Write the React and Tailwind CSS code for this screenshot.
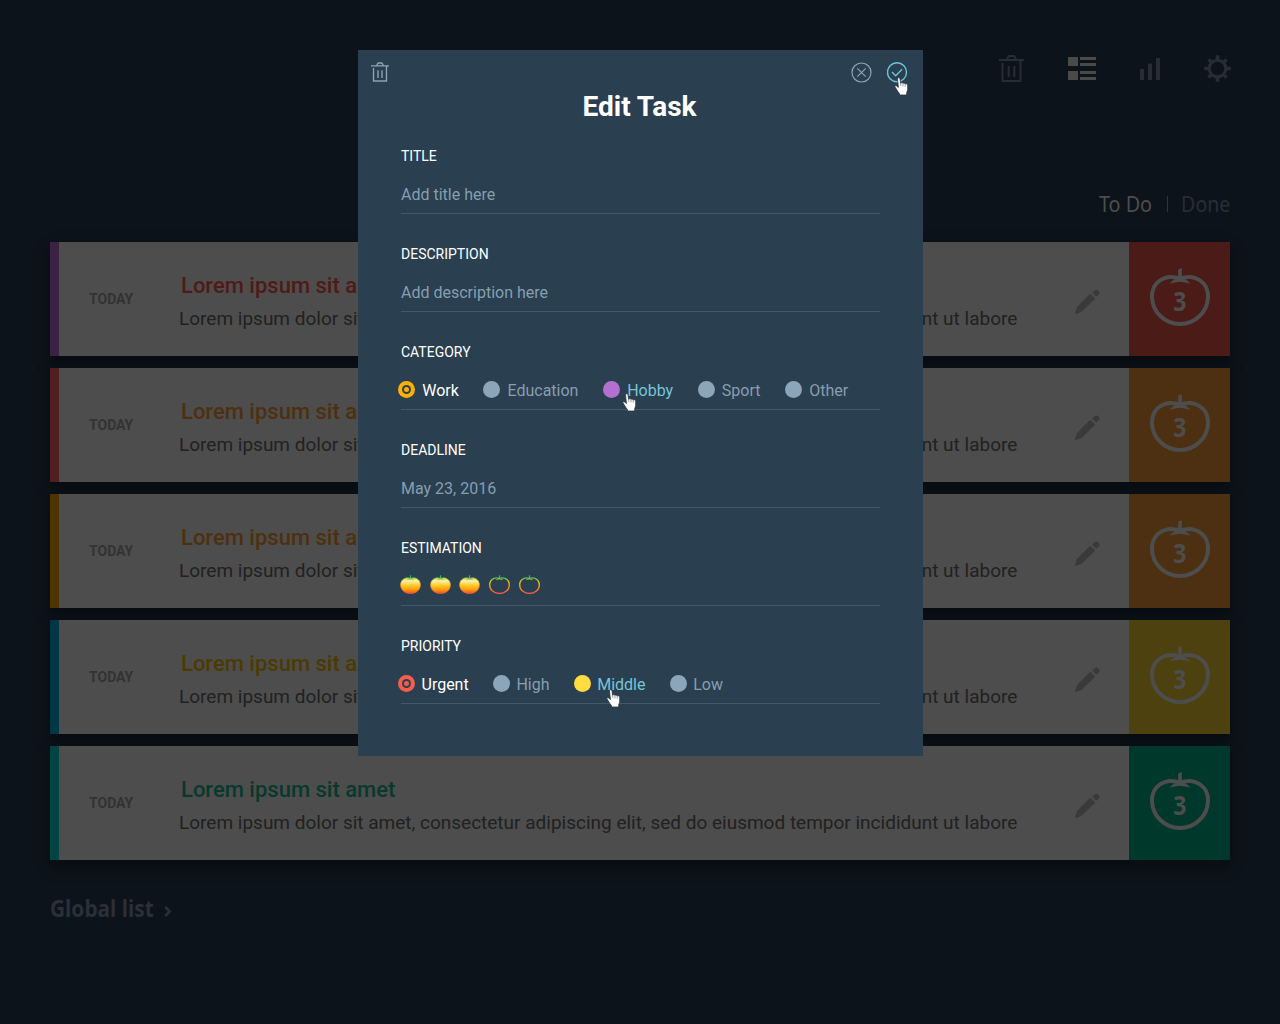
import React from "react";

const DESCRIPTION =
  "Lorem ipsum dolor sit amet, consectetur adipiscing elit, sed do eiusmod tempor incididunt ut labore";

const TASKS = [
  { strip: "bg-[#3b2144]", badge: "bg-[#4b1b17]", title: "text-[#4f1a17]" },
  { strip: "bg-[#511f20]", badge: "bg-[#4c3011]", title: "text-[#4d3010]" },
  { strip: "bg-[#4d3500]", badge: "bg-[#4c3011]", title: "text-[#4d3010]" },
  { strip: "bg-[#003747]", badge: "bg-[#4c410f]", title: "text-[#4b3b03]" },
  { strip: "bg-[#004444]", badge: "bg-[#00382c]", title: "text-[#08392c]" },
];

const CATEGORIES = [
  { name: "Work", dot: "bg-[#ffb000]", text: "text-white", selected: true },
  { name: "Education", dot: "bg-[#8da5b8]", text: "text-[#879eb1]" },
  { name: "Hobby", dot: "bg-[#b470d0]", text: "text-[#76c5d8]", hover: "left-[-5px] top-[14px]" },
  { name: "Sport", dot: "bg-[#8da5b8]", text: "text-[#879eb1]" },
  { name: "Other", dot: "bg-[#8da5b8]", text: "text-[#879eb1]" },
];

const PRIORITIES = [
  { name: "Urgent", dot: "bg-[#f75c4c]", text: "text-white", selected: true },
  { name: "High", dot: "bg-[#8da5b8]", text: "text-[#879eb1]" },
  { name: "Middle", dot: "bg-[#ffdc40]", text: "text-[#76c5d8]", hover: "left-[9px] top-[16px]" },
  { name: "Low", dot: "bg-[#8da5b8]", text: "text-[#879eb1]" },
];

function TrashIcon({ className, strokeWidth = 2 }) {
  return (
    <svg className={className} viewBox="0 0 25 27" fill="none" stroke="currentColor" strokeWidth={strokeWidth}>
      <path d="M0 5H25M3.500 8V26H21.500V5M8.500 5V3L10 1H15L16.500 3V5M9.700 11V22M15.300 11V22" />
    </svg>
  );
}

function ListIcon() {
  return (
    <svg className="h-[23px] w-7" viewBox="0 0 28 23" fill="currentColor">
      <path d="M0 0H10V9H0ZM0 14H10V23H0ZM12 0H28V3H12ZM12 6H28V9H12ZM12 14H28V17H12ZM12 20H28V23H12Z" />
    </svg>
  );
}

function ChartIcon() {
  return (
    <svg className="h-[22px] w-5" viewBox="0 0 20 22" fill="currentColor">
      <path d="M0 11H4V22H0ZM8 5.500H12V22H8ZM16 0H20V22H16Z" />
    </svg>
  );
}

function GearIcon() {
  return (
    <svg className="size-[27px]" viewBox="-13.500 -13.500 27 27" fill="none" stroke="currentColor">
      <circle r="8.300" strokeWidth="3" />
      <g strokeWidth="3.600">
        <path d="M0 -9V-13.300M0 9V13.300M-9 0H-13.300M9 0H13.300M6.400 -6.400L9 -9M-6.400 -6.400L-9 -9M6.400 6.400L9 9M-6.400 6.400L-9 9" />
      </g>
    </svg>
  );
}

function PencilIcon() {
  return (
    <svg className="size-[25px] text-[#3a3a3a]" viewBox="0 0 25 25" fill="currentColor">
      <path d="M15.800 5.200L19.800 9.200Q20 9.700 19.600 10.200L7 22.600L1.100 25Q0 25.200 0.100 24L2.200 17.700L14.700 5.300Q15.300 4.800 15.800 5.200Z" />
      <path d="M17.300 3.600L20 0.900Q21.500 -0.200 23.200 1.400Q25.200 3.300 24.200 4.900L21.400 7.700Z" />
    </svg>
  );
}

function TomatoBadge() {
  return (
    <div className="relative mt-[26px] ml-[21px] h-[58px] w-[60px]">
      <svg className="size-full" viewBox="0 0 60 58">
        <path
          d="M30 10.500C25 9 20 8.300 15.500 9.800C7 12.500 2 19.500 2 28.500C2 44 15 56 30 56C45 56 58 44 58 28.500C58 19.500 53 12.500 44.500 9.800C40 8.300 35 9 30 10.500Z"
          fill="none"
          stroke="#4d4d4d"
          strokeWidth="4"
        />
        <path
          d="M28.200 1.500L31.800 0V8.600L35 11Q37.500 12.500 40.500 15.800Q35 14.300 30 13.800Q25 14.300 19.500 15.800Q22.500 12.500 25 11L28.200 8.600Z"
          fill="#4d4d4d"
        />
      </svg>
      <span className="absolute inset-x-0 top-[15px] text-center font-['Noto_Sans',sans-serif] text-[27px] leading-9 font-bold text-[#4d4d4d]">
        <span className="inline-block scale-x-85">3</span>
      </span>
    </div>
  );
}

function TaskCard({ task }) {
  return (
    <article className="flex h-[114px] bg-[#4d4d4d] shadow-[0_6px_12px_rgba(4,10,12,0.7)]">
      <div className={`w-[9px] ${task.strip}`} />
      <div className="w-[120px] pt-[47px] pl-[30px] text-sm font-bold text-[#333333]">TODAY</div>
      <div className="min-w-0 flex-1 pt-[30px]">
        <h2 className={`pl-0.5 text-[22px] leading-7 font-medium ${task.title}`}>Lorem ipsum sit amet</h2>
        <p className="mt-[5px] text-[19px] leading-7 whitespace-nowrap text-[#212121]">{DESCRIPTION}</p>
      </div>
      <div className="w-[54px] pt-[47px]">
        <PencilIcon />
      </div>
      <div className={`w-[101px] ${task.badge}`}>
        <TomatoBadge />
      </div>
    </article>
  );
}

function HandCursor({ className }) {
  return (
    <svg className={`absolute z-10 h-[19px] w-[15px] ${className}`} viewBox="0 0 15 19">
      <path
        d="M3.500 1.800C3.500 0.300 5.800 0.300 6 1.800L6.600 6.300C7.200 5.200 8.600 5.400 8.900 6.400C9.700 5.600 10.900 6 11.200 7C12.200 6.300 13.700 7 13.700 8.300V12.500C13.700 14 12.700 14.700 12.700 16V18H5.500V16.500C4.500 15.400 3.400 14.200 2.700 12.600L1 10C0.500 8.900 1.700 8.300 2.600 9L4.400 10.500Z"
        fill="#fff"
        stroke="#2b3640"
        strokeWidth="0.800"
      />
      <path d="M6.800 6V9M9 6.400V9.400M11.200 7V9.800" stroke="#5b6670" strokeWidth="0.600" />
    </svg>
  );
}

function Radio({ option, className }) {
  return (
    <div className={`flex items-center ${className}`}>
      <span className={`-mt-[3px] flex size-[17px] items-center justify-center rounded-full ${option.dot}`}>
        {option.selected && (
          <span className="flex size-[9px] items-center justify-center rounded-full bg-[#2a3f4f]">
            <span className={`size-[5px] rounded-full ${option.dot}`} />
          </span>
        )}
      </span>
      <span className={`relative ${option.text}`}>
        {option.name}
        {option.hover && <HandCursor className={option.hover} />}
      </span>
    </div>
  );
}

function Tomato({ filled }) {
  return (
    <svg className="h-5 w-[21px]" viewBox="0 0 21 20">
      <defs>
        <linearGradient id="tomato-fill" x1="0" y1="0" x2="0" y2="1">
          <stop offset="0" stopColor="#e9d33c" />
          <stop offset="0.200" stopColor="#fff0b0" />
          <stop offset="0.500" stopColor="#ffc91f" />
          <stop offset="0.750" stopColor="#ff9a10" />
          <stop offset="1" stopColor="#f0501c" />
        </linearGradient>
        <linearGradient id="tomato-line" gradientUnits="userSpaceOnUse" x1="0" y1="1" x2="0" y2="19">
          <stop offset="0" stopColor="#1dac8b" />
          <stop offset="0.180" stopColor="#8ac13e" />
          <stop offset="0.340" stopColor="#f2c414" />
          <stop offset="0.650" stopColor="#f98a24" />
          <stop offset="1" stopColor="#f0544a" />
        </linearGradient>
      </defs>
      <path
        d="M10.500 3.400C8.500 2.700 6.500 2.700 5 3.300C2.300 4.400 0.700 6.700 0.700 9.900C0.700 15 5 18.500 10.500 18.500C16 18.500 20.300 15 20.300 9.900C20.300 6.700 18.700 4.400 16 3.300C14.500 2.700 12.500 2.700 10.500 3.400Z"
        fill={filled ? "url(#tomato-fill)" : "none"}
        stroke="url(#tomato-line)"
        strokeWidth={filled ? 0.8 : 1.3}
      />
      <path
        d="M10 0.500L11 0V3L14 4.900L10.500 4.200L7 4.900L10 3Z"
        fill="url(#tomato-line)"
        stroke="url(#tomato-line)"
        strokeWidth="0.200"
      />
    </svg>
  );
}

function Field({ label, children }) {
  return (
    <section className="mb-[30px] h-[68px] border-b border-[#435969]">
      <h3 className="text-sm text-white">{label}</h3>
      <div className="pt-[17px] text-base text-[#879eb1]">{children}</div>
    </section>
  );
}

function EditTaskDialog() {
  return (
    <div className="absolute top-[50px] left-[358px] h-[706px] w-[565px] bg-[#2a3f4f]">
      <div className="flex h-[41px] items-start pt-3 pr-[15px] pl-[13px] text-[#8da5b8]">
        <TrashIcon className="h-5 w-[18px]" strokeWidth={1.9} />
        <svg className="ml-auto size-[21px]" viewBox="0 0 21 21" fill="none" stroke="currentColor" strokeWidth="1.200">
          <circle cx="10.500" cy="10.500" r="9.500" />
          <path d="M6.300 6.300L14.700 14.700M14.700 6.300L6.300 14.700" />
        </svg>
        <div className="relative ml-[15px] text-[#6dc5d8]">
          <svg className="size-[21px]" viewBox="0 0 21 21" fill="none" stroke="currentColor" strokeWidth="1.400">
            <circle cx="10" cy="10.300" r="9.500" />
            <path d="M5 10.100L8.700 13.800L15.100 7.300" />
          </svg>
          <HandCursor className="top-[15px] left-[7px]" />
        </div>
      </div>
      <h1 className="h-[55px] text-center text-[28px] leading-8 font-bold text-white">
        <span className="relative -left-px">Edit Task</span>
      </h1>
      <div className="mx-[43px]">
        <Field label="TITLE">Add title here</Field>
        <Field label="DESCRIPTION">Add description here</Field>
        <Field label="CATEGORY">
          <div className="-ml-[3px] flex gap-[24.500px]">
            {CATEGORIES.map((o) => <Radio key={o.name} option={o} className="gap-[7.200px]" />)}
          </div>
        </Field>
        <Field label="DEADLINE">May 23, 2016</Field>
        <Field label="ESTIMATION">
          <div className="-ml-px flex gap-[8.700px]">
            {[true, true, true, false, false].map((f, i) => <Tomato key={i} filled={f} />)}
          </div>
        </Field>
        <Field label="PRIORITY">
          <div className="-ml-[3px] flex gap-[24.200px]">
            {PRIORITIES.map((o) => <Radio key={o.name} option={o} className="gap-[6.500px]" />)}
          </div>
        </Field>
      </div>
    </div>
  );
}

export default function App() {
  return (
    <div className="relative h-[1024px] w-[1280px] overflow-hidden bg-[#0d131a] px-[50px] font-[Roboto,sans-serif]">
      <header className="-mr-px flex h-[138px] items-start justify-end pt-[55px] text-[#282d35]">
        <TrashIcon className="mr-11 h-[27px] w-[25px]" />
        <div className="mt-0.5 mr-11 text-[#4a4a48]"><ListIcon /></div>
        <div className="mt-[3px] mr-11"><ChartIcon /></div>
        <GearIcon />
      </header>
      <nav className="flex h-[104px] justify-end pt-[49px] font-['Noto_Sans',sans-serif] text-[22px] leading-8">
        <span className="origin-right scale-x-90 text-[#4d4d4b]">To Do</span>
        <span className="mt-[9px] mr-2 ml-[15px] h-4 w-px bg-[#30343a]" />
        <span className="-ml-px origin-right scale-x-[0.890] text-[#282d38]">Done</span>
      </nav>
      <main className="flex flex-col gap-3">
        {TASKS.map((task, i) => <TaskCard key={i} task={task} />)}
      </main>
      <footer className="mt-[30px] flex font-['Noto_Sans',sans-serif] text-2xl leading-9 font-bold text-[#2b2f38]">
        <span className="w-[114px]">
          <span className="inline-block origin-left scale-x-[0.870] whitespace-nowrap">Global list</span>
        </span>
        <svg className="mt-4 h-[11px] w-2" viewBox="0 0 8 11" fill="none" stroke="currentColor" strokeWidth="2.600">
          <path d="M1.200 1L5.700 5.500L1.200 10" />
        </svg>
      </footer>
      <EditTaskDialog />
    </div>
  );
}
